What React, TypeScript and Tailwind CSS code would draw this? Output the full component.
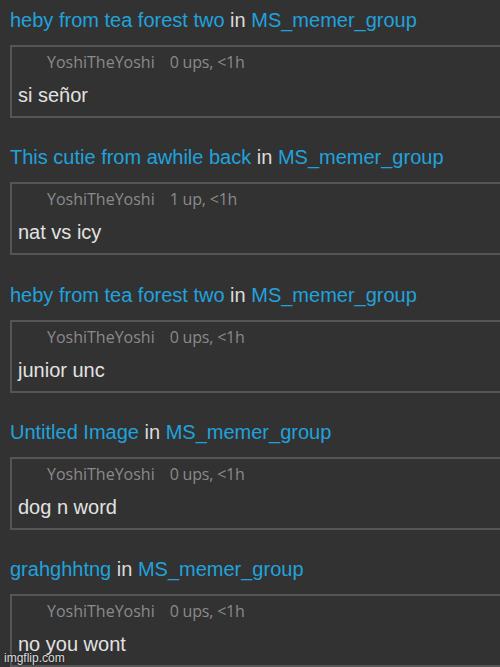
import React from "react";

const items = [
  { title: "heby from tea forest two", meta: "0 ups, <1h", text: "si señor" },
  { title: "This cutie from awhile back", meta: "1 up, <1h", text: "nat vs icy" },
  { title: "heby from tea forest two", meta: "0 ups, <1h", text: "junior unc" },
  { title: "Untitled Image", meta: "0 ups, <1h", text: "dog n word" },
  { title: "grahghhtng", meta: "0 ups, <1h", text: "no you wont" },
];

export default function App() {
  return (
    <div className="relative w-[500px] h-[667px] overflow-hidden bg-[#323232] pt-[9px] pl-[10px]">
      {items.map((it, i) => (
        <div key={i} className="mb-[28.25px]">
          <div className="h-[22px] leading-[22px] text-[20px] whitespace-nowrap [font-family:'Liberation_Sans',Arial,sans-serif] mb-[14px]">
            <span className="text-[#21a2dd]">{it.title}</span>
            <span className="text-[#dcdcdc]"> in </span>
            <span className="text-[#21a2dd]">MS_memer_group</span>
          </div>
          <div className="h-[73px] w-[500px] border-2 border-[#555555] pt-[7px]">
            <div className="h-[16px] leading-[16px] text-[16px] pl-[35px] text-[#8a8a8a] whitespace-nowrap [font-family:'Open_Sans',sans-serif]">
              <span>YoshiTheYoshi</span>
              <span className="ml-[15px] tracking-[-0.2px]">{it.meta}</span>
            </div>
            <div className="mt-[14px] h-[22px] leading-[22px] text-[20px] pl-[6px] text-[#e2e2e2] [font-family:'Liberation_Sans',Arial,sans-serif]">
              {it.text}
            </div>
          </div>
        </div>
      ))}
      <div className="absolute left-[4px] bottom-[2px] text-[12px] leading-[14px] text-white/85 [font-family:'Liberation_Sans',Arial,sans-serif] [text-shadow:0_0_2px_#000]">
        imgflip.com
      </div>
    </div>
  );
}
